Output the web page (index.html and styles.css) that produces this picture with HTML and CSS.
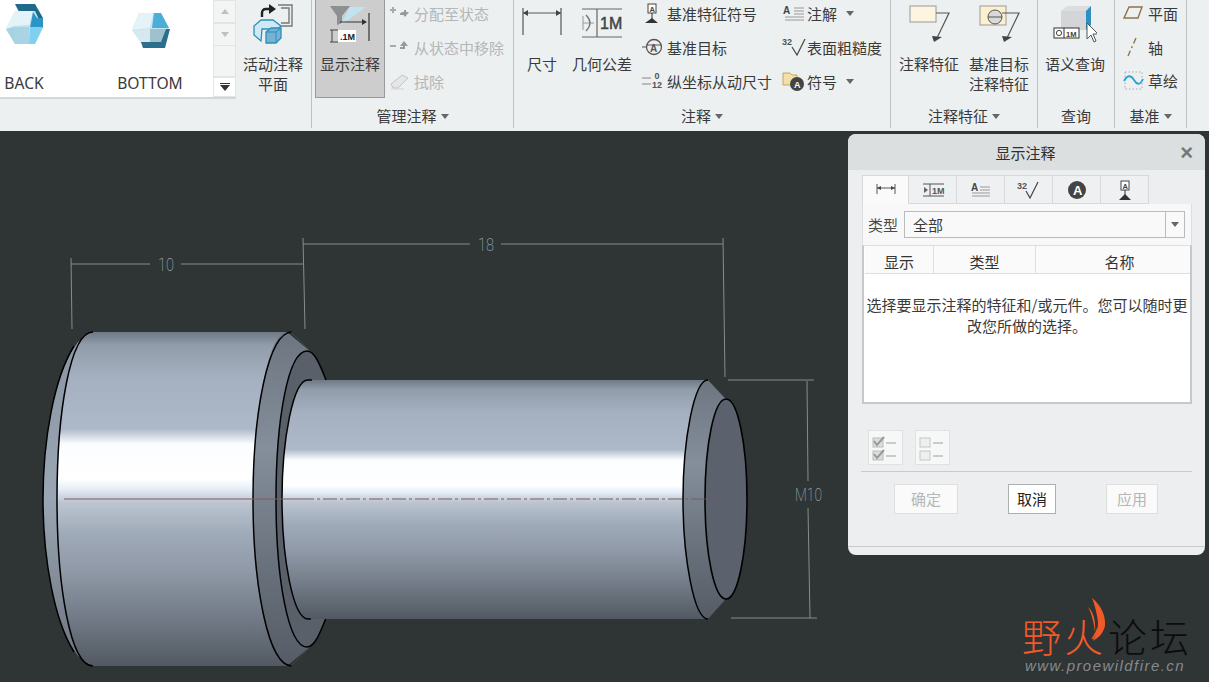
FILE: index.html
```html
<!DOCTYPE html>
<html lang="zh">
<head>
<meta charset="utf-8">
<title>显示注释</title>
<link rel="stylesheet" href="styles.css">
</head>
<body>
<header class="ribbon">
  <section class="group g1">
    <div class="gallery">
      <div class="tiles">
        <div class="tile t-back">
          <svg class="hex" viewBox="0 0 44 46"><path d="M13 3H33L41 17H34L31 11H17Z" fill="#1f6a8a"/><path d="M13 10H33L41 27 33 43H13L4 28Z" fill="#bfe2ee"/><path d="M13 10H31L27 24 12 25 4 28Z" fill="#e3f3f8"/><path d="M31 11 35 17H41V27H28Z" fill="#2b96c6"/><path d="M28 26H41L33 43H27Z" fill="#7fd0f0"/><path d="M4 28 13 26 13 43Z" fill="#a4d3e4"/><path d="M13 26H27V43H13Z" fill="#a9d4e3"/></svg>
          <span>BACK</span>
        </div>
        <div class="tile t-bottom">
          <svg class="hex" viewBox="0 0 44 46"><path d="M11 12H33L41 27 36 42H13L4 29Z" fill="#c5e6f0"/><path d="M11 12H25L22 27 4 29Z" fill="#e3f3f8"/><path d="M26 12H33L41 27 24 27Z" fill="#4aaed6"/><path d="M5 30 22 28V41H13Z" fill="#d7e9ef"/><path d="M22 28 38 28 34 41H22Z" fill="#9fc0cd"/><path d="M38 28H42L37 47H15L13 41H33Z" fill="#2c6f8d"/></svg>
          <span>BOTTOM</span>
        </div>
      </div>
      <div class="scroller">
        <div class="sc-btn sc-up"><i class="tri-up"></i></div>
        <div class="sc-btn sc-down"><i class="tri-down"></i></div>
        <div class="sc-track"></div>
        <div class="sc-btn sc-more"><i class="more-line"></i><i class="tri-more"></i></div>
      </div>
    </div>
    <div class="big b-active">
      <svg class="ico" viewBox="0 0 44 54"><path d="M27 5H41V26H27M30 8H38V23H30" fill="none" stroke="#777" stroke-width="1.4"/><path d="M11 17V13Q11 9 15 9H19" fill="none" stroke="#222" stroke-width="2.4"/><path d="M18 4 25 9 18 14Z" fill="#222"/><path d="M3 26 10 20H22L30 26 24 31 20 30V29H11L10 41 3 35Z" fill="#cfe9f4" stroke="#2b8fbe" stroke-width="1.3"/><path d="M15 32 20 28H30V38L25 43H15Z" fill="#76b3d0" stroke="#2b8fbe" stroke-width="1.3"/><path d="M15 32H25V43M25 32 30 28" fill="none" stroke="#2b8fbe"/></svg>
      <span>活动注释<br>平面</span>
    </div>
    <div class="grow"></div>
  </section>

  <section class="group g2">
    <div class="top">
      <div class="big b-show">
        <svg class="ico" viewBox="0 0 44 54"><path d="M2 6H22L14 16V23L9 25V16Z" fill="#8d8f90"/><path d="M22 7H38L12 26Z" fill="#bfe3f1"/><path d="M12 22H38" stroke="#333"/><path d="M34 19 39 22 34 25Z" fill="#333"/><path d="M41 13V41" stroke="#333" stroke-width="1.2"/><rect x="10" y="30" width="18" height="12" fill="#fff"/><text class="ico-t" x="12" y="40">.1M</text><path d="M2 30H10M2 42H10M4 30V42" stroke="#444"/></svg>
        <span>显示注释</span>
      </div>
      <div class="col c-state">
        <div class="row dis"><svg class="sm" viewBox="0 0 26 20"><path d="M2 7H8M5 4V10" stroke="#aaa" stroke-width="2"/><path d="M12 11H17V7" fill="none" stroke="#999" stroke-width="2"/><path d="M13 9 17 14 21 9Z" fill="#999"/></svg><span>分配至状态</span></div>
        <div class="row dis"><svg class="sm" viewBox="0 0 26 20"><path d="M2 9H8" stroke="#aaa" stroke-width="2"/><path d="M12 11H16V8" fill="none" stroke="#999" stroke-width="2"/><path d="M12 9 16 4 20 9Z" fill="#999"/></svg><span>从状态中移除</span></div>
        <div class="row dis"><svg class="sm" viewBox="0 0 26 20"><path d="M3 13 14 4 20 7 10 17H5Z" fill="#e6e6e6" stroke="#c5c5c5"/><path d="M3 18H16" stroke="#d5d5d5"/></svg><span>拭除</span></div>
      </div>
    </div>
    <div class="glabel">管理注释<i class="caret"></i></div>
  </section>

  <section class="group g3">
    <div class="top">
      <div class="big b-dim">
        <svg class="ico" viewBox="0 0 44 54"><path d="M3 8V35M41 8V35" stroke="#555" stroke-width="1.2"/><path d="M3 13H41" stroke="#555"/><path d="M3 13 8 10V16ZM41 13 36 10V16Z" fill="#444"/></svg>
        <span>尺寸</span>
      </div>
      <div class="big b-geo">
        <svg class="ico" viewBox="0 0 44 54"><path d="M2 9H42M2 37H42M17 9V37" stroke="#666" stroke-width="1.2"/><path d="M3 16V30M3 23H14" stroke="#999"/><path d="M6 15Q14 23 6 31" fill="none" stroke="#777" stroke-width="1.3"/><text class="geo-t" x="20" y="29">1M</text></svg>
        <span>几何公差</span>
      </div>
      <div class="col c-a">
        <div class="row"><svg class="sm" viewBox="0 0 27 22"><rect x="8" y="2" width="8" height="9" fill="#fff" stroke="#444"/><text class="tiny" x="9.5" y="9.5">A</text><path d="M12 11V17" stroke="#333"/><path d="M5 21 12 16 18 21Z" fill="#333"/></svg><span>基准特征符号</span></div>
        <div class="row"><svg class="sm" viewBox="0 0 27 22"><path d="M2 11H7" stroke="#555"/><circle cx="14" cy="11" r="7.5" fill="none" stroke="#555" stroke-width="1.3"/><path d="M7 9H21" stroke="#555"/><text class="tiny2" x="10" y="16">A</text></svg><span>基准目标</span></div>
        <div class="row"><svg class="sm" viewBox="0 0 27 22"><path d="M2 8H11M2 14H11" stroke="#888" stroke-width="1.2"/><text class="tiny4" x="14.5" y="9">0</text><text class="tiny4" x="12" y="18">12</text></svg><span>纵坐标从动尺寸</span></div>
      </div>
      <div class="col c-b">
        <div class="row"><svg class="sm2" viewBox="0 0 25 22"><text class="tiny3" x="1" y="12">A</text><path d="M12 6H22M12 9H22M12 12H22M3 15H22M3 18H22" stroke="#999"/></svg><span>注解</span><i class="caret c-gap"></i></div>
        <div class="row"><svg class="sm2" viewBox="0 0 25 22"><text class="tiny4" x="0" y="9">32</text><path d="M10 11 15 19 23 3" fill="none" stroke="#444" stroke-width="1.2"/></svg><span>表面粗糙度</span></div>
        <div class="row"><svg class="sm2" viewBox="0 0 25 22"><path d="M1 3H8L10 5H15V15H1Z" fill="#f3dfa8" stroke="#c9a45c"/><circle cx="15" cy="14" r="7" fill="#444"/><text class="tiny-w" x="12" y="18">A</text></svg><span>符号</span><i class="caret c-gap"></i></div>
      </div>
    </div>
    <div class="glabel">注释<i class="caret"></i></div>
  </section>

  <section class="group g4">
    <div class="top">
      <div class="big">
        <svg class="ico" viewBox="0 0 44 54"><rect x="3" y="6" width="26" height="16" fill="#fdf5df" stroke="#999"/><path d="M29 13H42L30 38" fill="none" stroke="#555" stroke-width="1.2"/><path d="M25 36 35 37 27 42Z" fill="#444"/></svg>
        <span>注释特征</span>
      </div>
      <div class="big">
        <svg class="ico" viewBox="0 0 44 54"><rect x="3" y="6" width="26" height="19" fill="#fdf0cf" stroke="#999"/><circle cx="18" cy="17" r="7" fill="#d9d9d9" stroke="#555"/><path d="M11 17H25" stroke="#555"/><path d="M25 13H42L30 38" fill="none" stroke="#555" stroke-width="1.2"/><path d="M25 36 35 37 27 42Z" fill="#444"/></svg>
        <span>基准目标<br>注释特征</span>
      </div>
    </div>
    <div class="glabel">注释特征<i class="caret"></i></div>
  </section>

  <section class="group g5">
    <div class="top">
      <div class="big">
        <svg class="ico" viewBox="0 0 44 54"><path d="M8 11 14 6H38V26H8Z" fill="#dcdde0"/><path d="M8 11H33V30H8Z" fill="#d4d5d8"/><path d="M33 11 38 6V25L33 30Z" fill="#2f8fbe"/><rect x="1" y="28" width="25" height="10" fill="#fff" stroke="#333"/><path d="M11 28V38" stroke="#333"/><circle cx="6" cy="33" r="2.6" fill="none" stroke="#444"/><text class="tiny" x="13" y="36.5">1M</text><path d="M34 23V39L38 35 41 42 43 41 40 34H45Z" fill="#fff" stroke="#555"/></svg>
        <span>语义查询</span>
      </div>
    </div>
    <div class="glabel">查询</div>
  </section>

  <section class="group g6">
    <div class="col c-c">
      <div class="row"><svg class="sm" viewBox="0 0 26 22"><path d="M7 5H20L16 16H2Z" fill="none" stroke="#8c7547" stroke-width="1.4"/></svg><span>平面</span></div>
      <div class="row"><svg class="sm" viewBox="0 0 26 22"><path d="M14 2 6 20" fill="none" stroke="#8c7547" stroke-width="1.4" stroke-dasharray="6 3 2 3"/></svg><span>轴</span></div>
      <div class="row r-last"><svg class="sm" viewBox="0 0 26 22"><rect x="3" y="3" width="17" height="17" fill="none" stroke="#aaa" stroke-dasharray="1.5 2"/><path d="M2 12Q7 3 12 11T21 10" fill="none" stroke="#29a2d6" stroke-width="1.8"/></svg><span>草绘</span></div>
    </div>
    <div class="glabel">基准<i class="caret"></i></div>
  </section>
</header>

<main class="viewport">
  <svg class="model" viewBox="0 131 1209 551" aria-label="model">
    <defs>
      <linearGradient id="body" x1="0" y1="0" x2="0" y2="1">
        <stop offset="0" stop-color="#6f7884"/><stop offset=".04" stop-color="#929dab"/><stop offset=".14" stop-color="#a5b1c0"/><stop offset=".29" stop-color="#adb9c8"/><stop offset=".335" stop-color="#fbfdff"/><stop offset=".44" stop-color="#ffffff"/><stop offset=".47" stop-color="#e6eef7"/><stop offset=".51" stop-color="#bcc5d1"/><stop offset=".6" stop-color="#a0abb9"/><stop offset=".72" stop-color="#8e98a6"/><stop offset=".85" stop-color="#737c88"/><stop offset="1" stop-color="#525962"/>
      </linearGradient>
      <linearGradient id="cone" x1="0" y1="0" x2="0" y2="1">
        <stop offset="0" stop-color="#6d7580"/><stop offset=".35" stop-color="#848f9b"/><stop offset=".7" stop-color="#69717c"/><stop offset="1" stop-color="#555c66"/>
      </linearGradient>
      <linearGradient id="rim" x1="0" y1="0" x2="0" y2="1">
        <stop offset="0" stop-color="#8a95a3"/><stop offset=".5" stop-color="#9aa6b4"/><stop offset="1" stop-color="#6b737e"/>
      </linearGradient>
    </defs>
    <rect class="bg" x="0" y="131" width="1209" height="551"/>

    <path d="M78 342 93 332V666L78 656C54 625 43 560 43 499S54 373 78 342Z" fill="url(#rim)"/>
    <path class="ln" d="M74 346C54 378 43 440 43 499S54 620 74 652"/>
    <path d="M93 332H287V666H93C70 666 57 585 57 499S70 332 93 332Z" fill="url(#body)"/>
    <path class="ln" d="M93 332C70 332 57 413 57 499S70 666 93 666"/>

    <path d="M287 332 311 352V646L287 666C268 666 253 585 253 499S268 332 287 332Z" fill="url(#cone)"/>
    <path class="ln" d="M292 332C268 332 253 413 253 499S268 666 292 666"/>
    <path d="M291 332 310 351M291 666 310 647" stroke="#4b5158" stroke-width=".6"/>
    <ellipse cx="307" cy="499" rx="31" ry="148" fill="#59606a"/>
    <path class="ln" d="M326 380C319 362 314 351 307 351 288 351 276 420 276 499S288 647 307 647C314 647 319 636 326 618"/>
    <path d="M308 380C293 380 282 440 282 499S293 619 308 619Z" fill="#6a727d"/>

    <path d="M308 380H708V619H308C293 619 282 560 282 499S293 380 308 380Z" fill="url(#body)"/>
    <path class="ln" d="M312 380H308C293 380 282 440 282 499S293 619 308 619H311"/>

    <path d="M708 380 726 399 726 599 708 619C694 619 683 560 683 499S694 380 708 380Z" fill="url(#cone)"/>
    <path class="ln" d="M708 380C694 380 683 440 683 499S694 619 708 619"/>
    <path d="M708 380 726 399M708 619 726 599" stroke="#3c4147" stroke-width=".6"/>
    <ellipse class="ln-f" cx="726" cy="499" rx="21" ry="100"/>

    <path class="axis" d="M64 499H300"/>
    <path class="axis dash" d="M300 499H702"/>
    <path class="axis faint" d="M702 499H733"/>

    <g class="dim">
      <path d="M71 258 72 329M303 238 305 329M71 264H150M181 264H303M303 244H470M501 244H723M723 238 725 377M728 380H814M731 618H817M807 381 808 481M808 508 810 618"/>
    </g>
    <text class="dimt" x="158" y="271" textLength="16" lengthAdjust="spacingAndGlyphs">10</text>
    <text class="dimt" x="478" y="251" textLength="16" lengthAdjust="spacingAndGlyphs">18</text>
    <text class="dimt" x="795" y="501" textLength="27" lengthAdjust="spacingAndGlyphs">M10</text>
  </svg>

  <div class="watermark">
    <svg class="flame" viewBox="0 0 24 56"><path d="M8 2C17 9 22 20 21 30 19 38 14 42 9 45 14 36 15 28 13 20 12 14 10 7 8 2Z" fill="#f15a28"/><path d="M4 11C9 15 12 24 11 36 10 28 8 18 4 11Z" fill="#f15a28"/></svg>
    <div class="wm-title"><span class="wm-o">野火</span><span class="wm-k">论坛</span></div>
    <div class="wm-url">www.proewildfire.cn</div>
  </div>

  <aside class="dialog">
    <div class="d-title"><span>显示注释</span><b class="close">×</b></div>
    <div class="d-body">
      <div class="tabs">
        <div class="tab on"><svg viewBox="0 0 24 16"><path d="M3 2V12M21 2V12M3 6H21" stroke="#555"/><path d="M3 6 7 4V8ZM21 6 17 4V8Z" fill="#444"/></svg></div>
        <div class="tab"><svg viewBox="0 0 24 16"><path d="M2 2H23M2 14H23M9 2V14" stroke="#555"/><path d="M3 5 7 8 3 11Z" fill="#666"/><text class="tiny4" x="11" y="11.5">1M</text></svg></div>
        <div class="tab"><svg viewBox="0 0 24 18"><text class="tiny3" x="2" y="10">A</text><path d="M11 6H21M11 9H21M3 12H21M3 15H21" stroke="#999"/></svg></div>
        <div class="tab"><svg viewBox="0 0 24 18"><text class="tiny4" x="0" y="8">32</text><path d="M9 10 13 17 21 1" fill="none" stroke="#444" stroke-width="1.2"/></svg></div>
        <div class="tab"><svg viewBox="0 0 24 18"><circle cx="12" cy="9" r="9" fill="#444"/><text class="tiny-w2" x="8" y="14">A</text></svg></div>
        <div class="tab"><svg viewBox="0 0 24 20"><rect x="8" y="1" width="8" height="9" fill="#fff" stroke="#444"/><text class="tiny" x="9.5" y="8.5">A</text><path d="M12 10V15" stroke="#333"/><path d="M6 20 12 14 18 20Z" fill="#333"/></svg></div>
      </div>
      <div class="panel">
        <div class="type-row">
          <label>类型</label>
          <div class="select"><span>全部</span><div class="sel-btn"><i class="tri-sel"></i></div></div>
        </div>
      </div>
      <div class="table">
        <div class="thead"><div class="th th1">显示</div><div class="th th2">类型</div><div class="th th3">名称</div></div>
        <div class="tmsg">选择要显示注释的特征和/或元件。您可以随时更改您所做的选择。</div>
      </div>
      <div class="tools">
        <div class="tool"><svg viewBox="0 0 30 28"><rect x="2" y="4" width="10" height="9" fill="#ddd" stroke="#bbb"/><path d="M3 7 6 11 13 3" fill="none" stroke="#999" stroke-width="2"/><path d="M15 9H25" stroke="#bbb" stroke-width="1.5"/><rect x="2" y="17" width="10" height="9" fill="#ddd" stroke="#bbb"/><path d="M3 20 6 24 13 16" fill="none" stroke="#999" stroke-width="2"/><path d="M15 22H25" stroke="#bbb" stroke-width="1.5"/></svg></div>
        <div class="tool"><svg viewBox="0 0 30 28"><rect x="2" y="4" width="10" height="9" fill="#eeeff0" stroke="#c5c5c5"/><path d="M15 9H25" stroke="#bbb" stroke-width="1.5"/><rect x="2" y="17" width="10" height="9" fill="#eeeff0" stroke="#c5c5c5"/><path d="M15 22H25" stroke="#bbb" stroke-width="1.5"/></svg></div>
      </div>
      <div class="actions">
        <div class="btn off b1">确定</div>
        <div class="btn b2">取消</div>
        <div class="btn off b3">应用</div>
      </div>
    </div>
    <div class="d-foot"></div>
  </aside>
</main>
</body>
</html>
```
FILE: styles.css
```css
* { box-sizing: border-box; }
html, body { margin: 0; padding: 0; height: 682px; overflow: hidden; background: #2f3435; }
body { font-family: "Noto Sans CJK SC", "Noto Sans", sans-serif; font-size: 15px; color: #3a3a3a; }
i { display: block; }

.ribbon { display: flex; height: 131px; background: #edf0f1; overflow: hidden; }
.group { display: flex; flex-direction: column; height: 128px; border-right: 1px solid #bfc3c5; flex: none; }
.g1 { width: 312px; flex-direction: row; align-items: flex-start; }
.g2 { width: 202px; }
.g3 { width: 377px; }
.g4 { width: 147px; }
.g5 { width: 77px; }
.g6 { width: 72px; }
.top { display: flex; height: 98px; }
.glabel { display: flex; align-items: center; justify-content: center; height: 20px; margin-top: 8px; line-height: 20px; flex: none; }
.caret { width: 0; height: 0; margin-left: 4px; border: 4px solid transparent; border-top: 5px solid #666; border-bottom: 0; }
.c-gap { margin-left: 9px; }

.gallery { display: flex; width: 236px; height: 99px; background: #fff; border-bottom: 2px solid #d4d7d8; }
.tiles { display: flex; flex: 1; gap: 69px; }
.tile { display: flex; flex-direction: column; align-items: center; font-family: "Noto Sans", sans-serif; font-size: 15.6px; }
.t-back { width: 48px; }
.t-bottom { width: 66px; }
.tile span { margin-top: 26px; line-height: 20px; }
.hex { width: 44px; height: 46px; display: block; margin-top: 1px; overflow: visible; flex: none; }
.scroller { width: 23px; display: flex; flex-direction: column; }
.sc-btn { display: flex; flex-direction: column; align-items: center; justify-content: center; border: 1px solid #e2e4e5; background: #f3f5f5; }
.sc-up, .sc-down { height: 23px; }
.sc-track { height: 31px; background: #f3f5f5; border: 1px solid #e2e4e5; border-top: 0; }
.sc-more { height: 20px; background: #fff; gap: 1px; }
.tri-up { border: 4px solid transparent; border-bottom: 5px solid #bdbfc0; border-top: 0; }
.tri-down { border: 4px solid transparent; border-top: 5px solid #bdbfc0; border-bottom: 0; }
.tri-more { border: 5px solid transparent; border-top: 6px solid #333; border-bottom: 0; }
.more-line { width: 10px; height: 1px; background: #333; }

.big { display: flex; flex-direction: column; align-items: center; width: 60px; flex: none; text-align: center; line-height: 20px; }
.ico { width: 44px; height: 54px; display: block; flex: none; }
.b-active { width: 74px; }
.b-show { width: 70px; height: 98px; margin-left: 3px; background: #cdcdcd; border: 1px solid #9a9a9a; border-top: 0; }
.b-dim { width: 56px; }
.b-geo { width: 64px; }
.grow { flex: 1; }

.col { display: flex; flex-direction: column; margin-top: -4px; }
.row { display: flex; align-items: center; height: 34px; flex: none; white-space: nowrap; }
.r-last { height: 32px; }
.dis { color: #b4b6b7; }
.sm { width: 26px; height: 22px; flex: none; display: block; }
.sm2 { width: 25px; height: 22px; flex: none; display: block; }
.c-state { margin-left: 3px; }
.c-a { margin-left: 6px; width: 142px; }
.c-a .sm { width: 27px; }
.c-c { margin-left: 7px; height: 102px; flex: none; }

.g4 .top { padding-left: 8px; gap: 10px; }
.g5 .top { justify-content: center; padding-right: 2px; }

.ico-t { font: bold 9px "Liberation Sans", sans-serif; fill: #222; }
.geo-t { font: 16px "Liberation Sans", sans-serif; fill: #444; stroke: #444; stroke-width: .5; }
.tiny { font: bold 7.5px "Liberation Sans", sans-serif; fill: #444; }
.tiny2 { font: bold 10px "Liberation Sans", sans-serif; fill: #555; }
.tiny3 { font: bold 10px "Liberation Sans", sans-serif; fill: #444; }
.tiny4 { font: bold 9px "Liberation Sans", sans-serif; fill: #555; }
.tiny-w { font: bold 9px "Liberation Sans", sans-serif; fill: #fff; }
.tiny-w2 { font: bold 13px "Liberation Sans", sans-serif; fill: #fff; }

.viewport { position: relative; height: 551px; background: #2f3435; overflow: hidden; }
.model { display: block; width: 1209px; height: 551px; }
.bg { fill: #2f3435; }
.ln { fill: none; stroke: #000; stroke-width: 1.5; }
.ln-f { fill: #5b626d; stroke: #000; stroke-width: 1.6; }
.axis { fill: none; stroke: #7d5a60; stroke-width: 1.2; }
.dash { stroke-dasharray: 14 3 3 3; }
.faint { stroke: #6b5a62; stroke-width: .8; }
.dim path { fill: none; stroke: #858d92; stroke-width: 1; }
.dimt { font: 200 19px Roboto, "Liberation Sans", sans-serif; fill: #9a9fa2; }

.dialog { position: absolute; top: 3px; right: 4px; width: 357px; height: 421px; background: #edeef0; border-radius: 8px; overflow: hidden; display: flex; flex-direction: column; }
.d-title { position: relative; flex: none; height: 36px; background: #dcdfdf; text-align: center; line-height: 38px; color: #2f2f2f; padding-right: 2px; }
.close { position: absolute; top: 0; right: 12px; font: bold 22px/37px "Liberation Sans", sans-serif; color: #777; }
.d-body { flex: 1; padding: 5px 13px 0 14px; }
.tabs { display: flex; height: 29px; }
.tab { width: 48px; height: 29px; background: #eff0f2; border: 1px solid #d6d8da; border-left: 0; display: flex; align-items: center; justify-content: center; }
.tab svg { width: 24px; height: 20px; display: block; }
.tab.on { width: 47px; background: #fafafa; border-left: 1px solid #d6d8da; border-bottom: 0; }
.panel { height: 41px; width: 330px; background: #f8f8f9; border: 1px solid #dcdedf; border-top: 0; border-bottom: 0; padding: 7px 6px 0 5px; }
.type-row { display: flex; align-items: center; gap: 6px; }
.type-row label { width: 30px; flex: none; color: #4a4a4a; }
.select { flex: 1; height: 27px; display: flex; background: #f9f9fa; border: 1px solid #b9bcbe; justify-content: space-between; align-items: center; padding-left: 8px; }
.sel-btn { width: 19px; height: 25px; border-left: 1px solid #b9bcbe; display: flex; align-items: center; justify-content: center; }
.tri-sel { border: 4px solid transparent; border-top: 5px solid #666; border-bottom: 0; }
.table { width: 330px; height: 159px; background: #fff; border: 2px solid #c6c9cb; border-top: 1px solid #dcdedf; }
.thead { display: flex; height: 28px; background: #fafafa; border-bottom: 1px solid #dcdedf; margin-left: 1px; }
.th { text-align: center; line-height: 31px; border-right: 1px solid #dcdedf; color: #333; }
.th1 { width: 69px; }
.th2 { width: 102px; }
.th3 { flex: 1; border-right: 0; padding-left: 13px; }
.tmsg { padding: 20px 0 0 0; line-height: 21px; text-align: center; color: #3a3a3a; }
.tools { display: flex; gap: 12px; margin-top: 26px; margin-left: 6px; padding-bottom: 6px; }
.tool { width: 35px; height: 35px; background: #f6f7f7; border: 1px solid #dfe1e2; display: flex; align-items: center; justify-content: center; }
.tool svg { width: 30px; height: 28px; display: block; }
.actions { display: flex; border-top: 1px solid #c8cacc; height: 44px; padding-top: 12px; width: 331px; margin-left: -1px; }
.btn { height: 30px; text-align: center; line-height: 28px; background: #fff; border: 1px solid #aeb0b2; color: #222; }
.btn.off { background: #fafafa; border-color: #dcdedf; color: #b4b6b7; }
.b1 { width: 64px; margin-left: 33px; }
.b2 { width: 48px; margin-left: 50px; }
.b3 { width: 52px; margin-left: 50px; }
.d-foot { flex: none; height: 9px; border-top: 1px solid #c8cacc; }

.watermark { position: absolute; left: 1022px; top: 465px; width: 175px; height: 85px; }
.flame { position: absolute; left: 62px; top: 0; width: 24px; height: 56px; }
.wm-title { position: absolute; left: 0; top: 19px; font-size: 39px; line-height: 40px; font-weight: 200; white-space: nowrap; letter-spacing: 3px; }
.wm-o { color: #f15a28; }
.wm-k { color: #0c0c0c; margin-left: 2px; }
.wm-url { position: absolute; left: 3px; top: 60px; font: italic 15px/20px "Liberation Sans", sans-serif; color: #858b8e; letter-spacing: 1.45px; white-space: nowrap; }
```
